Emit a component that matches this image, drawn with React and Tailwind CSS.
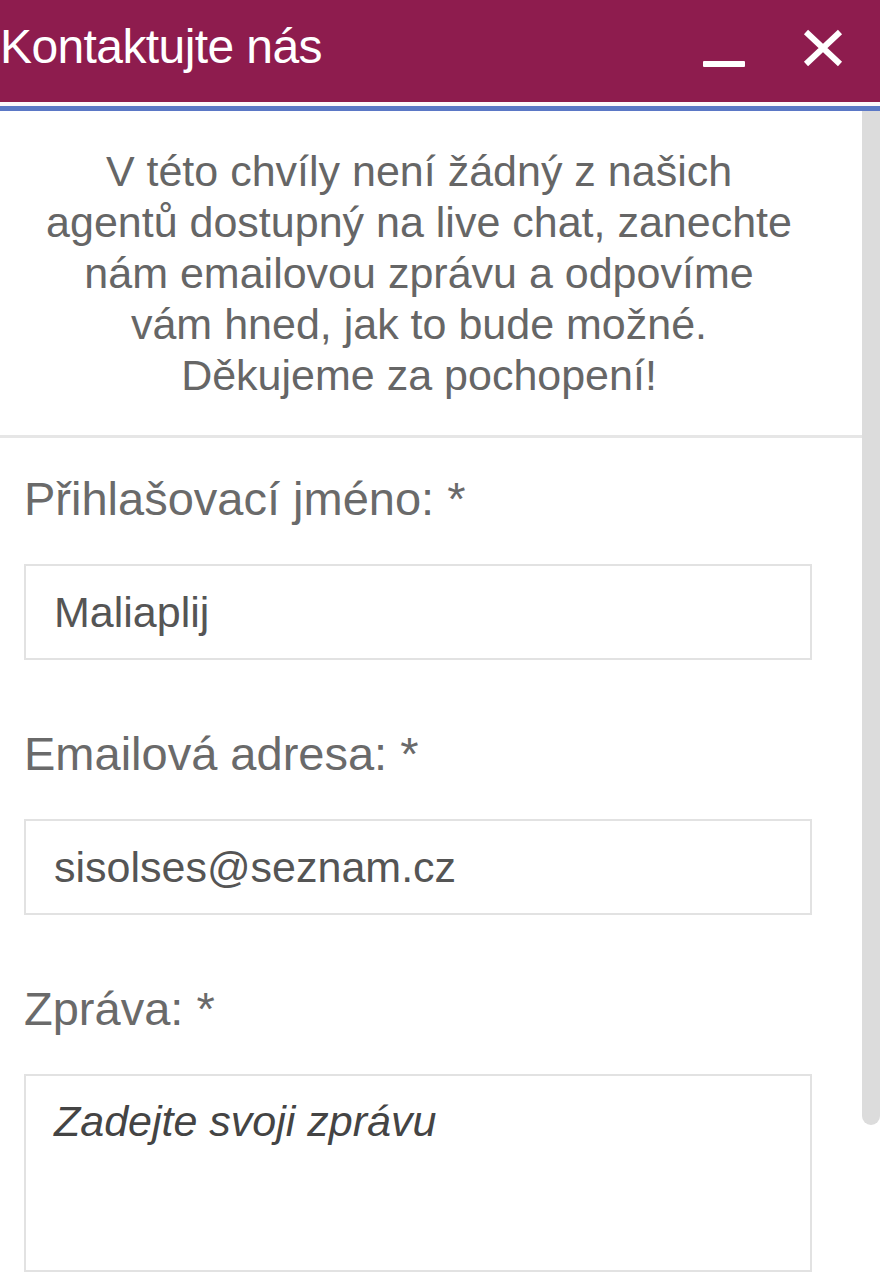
export default function App() {
  const font = "font-['Liberation_Sans',Arial,Helvetica,sans-serif]";
  return (
    <div className={`w-[880px] h-[1285px] overflow-hidden bg-white ${font}`}>
      {/* Header */}
      <div className="h-[102px] bg-[#8e1c4e] flex items-center justify-between pl-[0px] pr-[37px]">
        <div className="text-white text-[48px] leading-none pb-[8px] tracking-[-0.6px]">Kontaktujte nás</div>
        <div className="flex items-center gap-[58px]">
          <div className="w-[42px] h-[6px] bg-white mt-[26px] rounded-[1px]" />
          <svg width="40" height="38" viewBox="0 0 40 38" className="mb-[6px]">
            <path d="M3 3 L37 35 M37 3 L3 35" stroke="white" strokeWidth="6" strokeLinecap="butt" fill="none" />
          </svg>
        </div>
      </div>
      <div className="h-[4px] bg-[#fdf7fb]" />
      <div className="h-[5px] bg-[#5b78c6]" />

      <div className="flex">
        <div className="flex-1">
          <div className="pl-[24px] pr-[48px] pt-[35px] pb-[34px] text-center text-[43px] leading-[51px] text-[#666666]">
            V této chvíly není žádný z našich
            <br />
            agentů dostupný na live chat, zanechte
            <br />
            nám emailovou zprávu a odpovíme
            <br />
            vám hned, jak to bude možné.
            <br />
            Děkujeme za pochopení!
          </div>
          <div className="h-[3px] bg-[#e6e6e6]" />
          <div className="pl-[24px] pr-[50px] pt-[33px] flex flex-col">
            <div className="text-[47px] leading-[56px] text-[#6a6a6a] mb-[37px]">Přihlašovací jméno: *</div>
            <div className="h-[96px] border-2 border-[#e2e2e2] flex items-center pl-[28px] text-[43px] text-[#555555]">
              Maliaplij
            </div>
            <div className="text-[47px] leading-[56px] text-[#6a6a6a] mt-[66px] mb-[37px]">Emailová adresa: *</div>
            <div className="h-[96px] border-2 border-[#e2e2e2] flex items-center pl-[28px] text-[43px] text-[#555555]">
              sisolses@seznam.cz
            </div>
            <div className="text-[47px] leading-[56px] text-[#6a6a6a] mt-[66px] mb-[37px]">Zpráva: *</div>
            <div className="h-[198px] border-2 border-[#e2e2e2] pl-[28px] pt-[20px] text-[43px] leading-[51px] italic text-[#444444]">
              Zadejte svoji zprávu
            </div>
          </div>
        </div>
        <div className="w-[18px]">
          <div className="h-[1014px] bg-[#dcdcdc] rounded-b-[9px]" />
        </div>
      </div>
    </div>
  );
}
